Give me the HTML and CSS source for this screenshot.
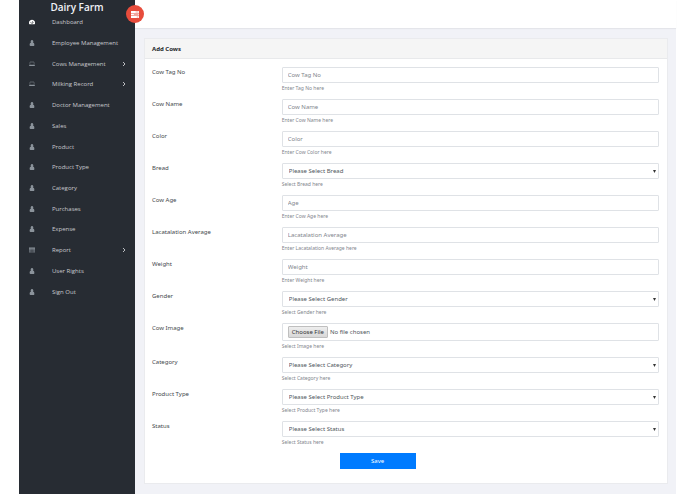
FILE: index.html
```html
<!DOCTYPE html>
<html lang="en">
<head>
    <meta charset="UTF-8">
    <meta name="viewport" content="width=device-width, initial-scale=1.0">
    <title>Dairy Farm - Add Cows</title>
    <link rel="stylesheet" href="styles.css">
</head>
<body>
    <!-- shared icons -->
    <svg class="sprite" aria-hidden="true">
        <symbol id="user" viewBox="0 0 12 14"><path d="M6 0a3 3.400 0 0 1 2 6c2.600.3 3.500 2.600 3.500 5.500 0 1.500-.7 2.500-2 2.500h-7c-1.300 0-2-1-2-2.500 0-2.900.9-5.200 3.500-5.500a3 3.400 0 0 1 2-6z"/></symbol>
        <symbol id="gauge" viewBox="0 0 14 12"><path fill-rule="evenodd" d="M1 11.500a7 7 0 1 1 12 0zM2 7a1 1 0 1 0 2 0 1 1 0 1 0-2 0zM8 3.500L6.800 7.200a1.500 1.500 0 1 0 1.200.4L9 4zM10 7a1 1 0 1 0 2 0 1 1 0 1 0-2 0z"/></symbol>
        <symbol id="laptop" viewBox="0 0 16 12"><path fill-rule="evenodd" d="M3 0h10q1 0 1 1v8H2V1q0-1 1-1zM3 1v7h10V1zM0 9.500h16v1q0 1-1 1H1q-1 0-1-1z"/></symbol>
        <symbol id="table" viewBox="0 0 14 12"><path fill-rule="evenodd" d="M0 0h14v12H0zM1 3v2h3V3zM5 3v2h4V3zM10 3v2h3V3zM1 6v2h3V6zM5 6v2h4V6zM10 6v2h3V6zM1 9v2h3V9zM5 9v2h4V9zM10 9v2h3V9z"/></symbol>
        <symbol id="chevron" viewBox="0 0 6 8"><path d="M1.500 1l3 3-3 3" fill="none" stroke="currentColor" stroke-width="1.400"/></symbol>
        <symbol id="tasks" viewBox="0 0 14 12"><path fill-rule="evenodd" d="M0 0h14v3.300H0zM8 1.200v1h5v-1zM0 4.300h14v3.300H0zM5 5.500v1h8v-1zM0 8.700h14V12H0zM10 9.800v1h3v-1z"/></symbol>
    </svg>

    <div class="page">
        <aside class="sidebar">
            <a class="brand" href="#">Dairy Farm</a>
            <nav>
                <ul class="menu">
                    <li class="active"><a href="#"><svg class="icon"><use href="#gauge"/></svg>Dashboard</a></li>
                    <li><a href="#"><svg class="icon"><use href="#user"/></svg>Employee Management</a></li>
                    <li><a href="#"><svg class="icon"><use href="#laptop"/></svg>Cows Management<svg class="arrow"><use href="#chevron"/></svg></a></li>
                    <li><a href="#"><svg class="icon"><use href="#laptop"/></svg>Milking Record<svg class="arrow"><use href="#chevron"/></svg></a></li>
                    <li><a href="#"><svg class="icon"><use href="#user"/></svg>Doctor Management</a></li>
                    <li><a href="#"><svg class="icon"><use href="#user"/></svg>Sales</a></li>
                    <li><a href="#"><svg class="icon"><use href="#user"/></svg>Product</a></li>
                    <li><a href="#"><svg class="icon"><use href="#user"/></svg>Product Type</a></li>
                    <li><a href="#"><svg class="icon"><use href="#user"/></svg>Category</a></li>
                    <li><a href="#"><svg class="icon"><use href="#user"/></svg>Purchases</a></li>
                    <li><a href="#"><svg class="icon"><use href="#user"/></svg>Expense</a></li>
                    <li><a href="#"><svg class="icon"><use href="#table"/></svg>Report<svg class="arrow"><use href="#chevron"/></svg></a></li>
                    <li><a href="#"><svg class="icon"><use href="#user"/></svg>User Rights</a></li>
                    <li><a href="#"><svg class="icon"><use href="#user"/></svg>Sign Out</a></li>
                </ul>
            </nav>
        </aside>

        <div class="right-panel">
            <header class="header">
                <button class="menu-toggle" type="button" aria-label="Toggle menu"><svg><use href="#tasks"/></svg></button>
            </header>
            <main class="content">
                <form class="card">
                    <h1 class="card-header">Add Cows</h1>
                    <div class="card-body">
                        <div class="form-row">
                            <label for="tag">Cow Tag No</label>
                            <div class="field"><input class="control" type="text" id="tag" placeholder="Cow Tag No"><small>Enter Tag No here</small></div>
                        </div>
                        <div class="form-row">
                            <label for="name">Cow Name</label>
                            <div class="field"><input class="control" type="text" id="name" placeholder="Cow Name"><small>Enter Cow Name here</small></div>
                        </div>
                        <div class="form-row">
                            <label for="color">Color</label>
                            <div class="field"><input class="control" type="text" id="color" placeholder="Color"><small>Enter Cow Color here</small></div>
                        </div>
                        <div class="form-row">
                            <label for="bread">Bread</label>
                            <div class="field"><select class="control" id="bread"><option>Please Select Bread</option></select><small>Select Bread here</small></div>
                        </div>
                        <div class="form-row">
                            <label for="age">Cow Age</label>
                            <div class="field"><input class="control" type="text" id="age" placeholder="Age"><small>Enter Cow Age here</small></div>
                        </div>
                        <div class="form-row">
                            <label for="average">Lacatalation Average</label>
                            <div class="field"><input class="control" type="text" id="average" placeholder="Lacatalation Average"><small>Enter Lacatalation Average here</small></div>
                        </div>
                        <div class="form-row">
                            <label for="weight">Weight</label>
                            <div class="field"><input class="control" type="text" id="weight" placeholder="Weight"><small>Enter Weight here</small></div>
                        </div>
                        <div class="form-row">
                            <label for="gender">Gender</label>
                            <div class="field"><select class="control" id="gender"><option>Please Select Gender</option></select><small>Select Gender here</small></div>
                        </div>
                        <div class="form-row">
                            <label for="image">Cow Image</label>
                            <div class="field"><input class="control" type="file" id="image"><small>Select Image here</small></div>
                        </div>
                        <div class="form-row">
                            <label for="category">Category</label>
                            <div class="field"><select class="control" id="category"><option>Please Select Category</option></select><small>Select Category here</small></div>
                        </div>
                        <div class="form-row">
                            <label for="type">Product Type</label>
                            <div class="field"><select class="control" id="type"><option>Please Select Product Type</option></select><small>Select Product Type here</small></div>
                        </div>
                        <div class="form-row">
                            <label for="status">Status</label>
                            <div class="field"><select class="control" id="status"><option>Please Select Status</option></select><small>Select Status here</small></div>
                        </div>
                        <button class="save" type="submit">Save</button>
                    </div>
                </form>
            </main>
        </div>
    </div>
</body>
</html>
```
FILE: styles.css
```css
* {
    box-sizing: border-box;
}
body {
    margin: 0;
    background: #fff;
    color: #45494d;
    font-family: "Noto Sans", sans-serif;
    font-size: 6px;
    line-height: 10px;
}
a {
    color: inherit;
    text-decoration: none;
}
.sprite {
    display: none;
}
.page {
    display: flex;
    min-height: 100vh;
    margin: 0 19px;
}

/* sidebar */
.sidebar {
    flex: 0 0 116px;
    background: #272c33;
    color: #c8c9ce;
    font-family: "Open Sans", sans-serif;
}
.brand {
    display: block;
    color: #f1f2f7;
    font-size: 10px;
    font-weight: 600;
    line-height: 14px;
    text-align: center;
}
.menu {
    display: grid;
    grid-auto-rows: 1fr;
    min-height: 290px;
    margin: -2px 0 0;
    padding: 0 9px 0 10px;
    list-style: none;
}
.menu a {
    display: flex;
    align-items: center;
    height: 100%;
    font-size: 6px;
    white-space: nowrap;
}
.icon {
    width: 6px;
    height: 6px;
    margin-right: 17px;
    fill: #8b939b;
}
.active .icon {
    fill: #fff;
}
.arrow {
    width: 4px;
    height: 6px;
    margin-left: auto;
}

/* top bar */
.right-panel {
    flex: 1;
    min-width: 0;
    background: #f1f2f7;
}
.header {
    position: relative;
    height: 28px;
    background: #fff;
    box-shadow: 0 1px 1px rgba(0,0,0,0.05);
}
.menu-toggle {
    position: absolute;
    top: 5px;
    left: -9px;
    display: flex;
    align-items: center;
    justify-content: center;
    width: 18px;
    height: 18px;
    padding: 0;
    border: none;
    border-radius: 50%;
    background: #e74c3c;
    cursor: pointer;
}
.menu-toggle svg {
    width: 8px;
    height: 7px;
    fill: #fff;
}

/* form card */
.content {
    padding: 10px 8px 10px 9px;
}
.card {
    border: 1px solid #eaebee;
    background: #fff;
}
.card-header {
    margin: 0;
    padding: 5px 7px 4px;
    border-bottom: 1px solid #e8e9eb;
    background: #f5f5f5;
    color: #24282c;
    font-size: 6px;
    font-weight: 700;
    line-height: 10px;
}
.card-body {
    display: flex;
    flex-direction: column;
    padding: 8px 8px 14px 7px;
}
.form-row {
    display: grid;
    grid-template-columns: 1fr 3fr;
    column-gap: 4px;
    margin-bottom: 6px;
}
.field {
    display: flex;
    flex-direction: column;
}
.control {
    width: 100%;
    height: 16px;
    padding: 0 5px;
    border: 1px solid #dfe2e6;
    border-radius: 1px;
    background: #fff;
    color: #50565c;
    font: inherit;
}
.control::placeholder {
    color: #7f868d;
    opacity: 1;
}
select.control {
    appearance: none;
    padding: 0 6px;
    background: #fff url("data:image/svg+xml,%3Csvg xmlns='http://www.w3.org/2000/svg' viewBox='0 0 4 4'%3E%3Cpath d='M0 0h4L2 4z' fill='%23333'/%3E%3C/svg%3E") no-repeat right 2px center / 3px 3px;
}
input[type="file"].control {
    height: 18px;
    padding: 2px 5px;
}
.control::file-selector-button {
    height: 12px;
    margin: 0 2px 0 0;
    padding: 0 3px;
    border: 1px solid #bfbfbf;
    border-radius: 1px;
    background: linear-gradient(#eee, #d8d8d8);
    color: #333;
    font: inherit;
}
small {
    color: #7f868d;
    font-size: 5px;
    line-height: 10px;
}
.save {
    width: 15%;
    height: 16px;
    margin-left: 37%;
    padding: 0;
    border: none;
    background: #007bff;
    color: #fff;
    font: inherit;
    cursor: pointer;
}
```
